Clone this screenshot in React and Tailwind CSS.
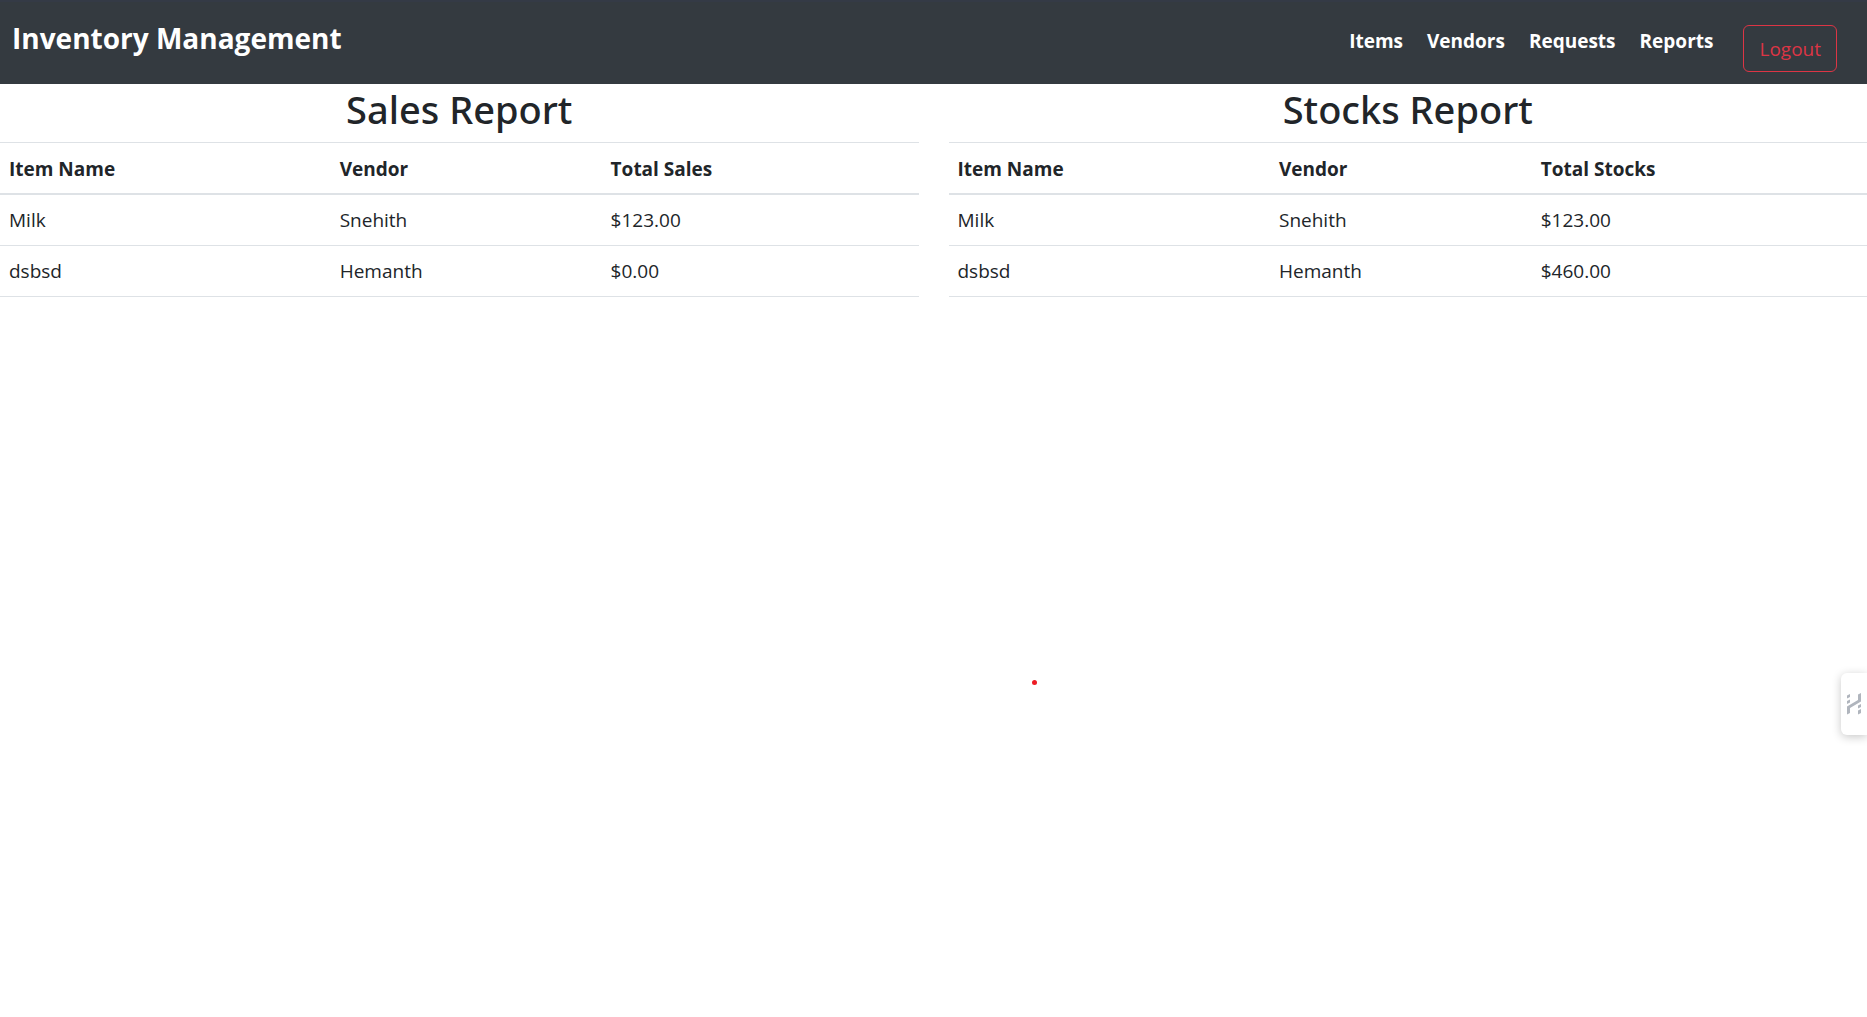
const navLinks = ["Items", "Vendors", "Requests", "Reports"];

const reports = [
  {
    title: "Sales Report",
    total: "Total Sales",
    columns: ["w-[36%]", "w-[29.5%]", "w-[34.5%]"],
    rows: [
      ["Milk", "Snehith", "$123.00"],
      ["dsbsd", "Hemanth", "$0.00"],
    ],
  },
  {
    title: "Stocks Report",
    total: "Total Stocks",
    columns: ["w-[35%]", "w-[28.5%]", "w-[36.5%]"],
    rows: [
      ["Milk", "Snehith", "$123.00"],
      ["dsbsd", "Hemanth", "$460.00"],
    ],
  },
];

function NavBar() {
  return (
    <header className="flex items-start justify-between border-t-2 border-[#343a46] bg-[#343a40] pr-[30px] pb-3 pl-3 text-white">
      <a href="#" className="mt-4 text-[28px] leading-10 font-bold">
        Inventory Management
      </a>
      <nav className="flex items-start gap-6">
        {navLinks.map((label) => (
          <a key={label} href="#" className="mt-[23px] text-[19px] leading-8 font-bold">
            {label}
          </a>
        ))}
        <button
          type="button"
          className="mt-[23px] ml-1.5 h-[47px] rounded-md border border-[#dc3545] px-[15px] pt-px text-[19px] text-[#dc3545]"
        >
          Logout
        </button>
      </nav>
    </header>
  );
}

function Report({ title, total, columns, rows }) {
  return (
    <section>
      <h1 className="mb-2 text-center font-['Noto_Sans','Open_Sans',sans-serif] text-[38px] leading-[50px] font-medium">
        {title}
      </h1>
      <table className="w-full table-fixed border-collapse text-left text-[19px] leading-[30px]">
        <thead>
          <tr className="border-t border-b-2 border-[#dee2e6]">
            {["Item Name", "Vendor", total].map((label, i) => (
              <th key={label} scope="col" className={`${columns[i]} px-[9px] pt-[11px] pb-[9px] font-bold`}>
                {label}
              </th>
            ))}
          </tr>
        </thead>
        <tbody>
          {rows.map((row) => (
            <tr key={row[0]} className="border-b border-[#dee2e6]">
              {row.map((cell) => (
                <td key={cell} className="px-[9px] py-[10px]">
                  {cell}
                </td>
              ))}
            </tr>
          ))}
        </tbody>
      </table>
    </section>
  );
}

function SideWidget() {
  return (
    <button
      type="button"
      aria-label="Open assistant"
      className="fixed top-[673px] right-0 flex h-[62px] w-[26px] items-center rounded-l-md bg-white pl-[6px] shadow-[0_2px_10px_rgba(0,0,0,0.22)]"
    >
      <svg width="14" height="22" viewBox="0 0 14 22" fill="#b0b5bd" aria-hidden="true">
        <path d="M0 2.5 3 1v3L0 5.500zM0 8l3-1.500v3L0 11z" />
        <path d="M11 1.500 14 0v8.500L3 15v5L0 21.500V13.500L11 7z" />
        <path d="M11 12.500 14 11v3l-3 1.500zM11 17.500l3-1.500v4l-3 1.500z" />
      </svg>
    </button>
  );
}

export default function App() {
  return (
    <div className="min-h-screen bg-white font-['Open_Sans',sans-serif] text-[#212529]">
      <NavBar />
      <main className="grid grid-cols-2 gap-[30px]">
        {reports.map((report) => (
          <Report key={report.title} {...report} />
        ))}
      </main>
      <span className="fixed top-[680px] left-[1032px] size-[5px] rounded-full bg-[#ed1c24]" />
      <SideWidget />
    </div>
  );
}
